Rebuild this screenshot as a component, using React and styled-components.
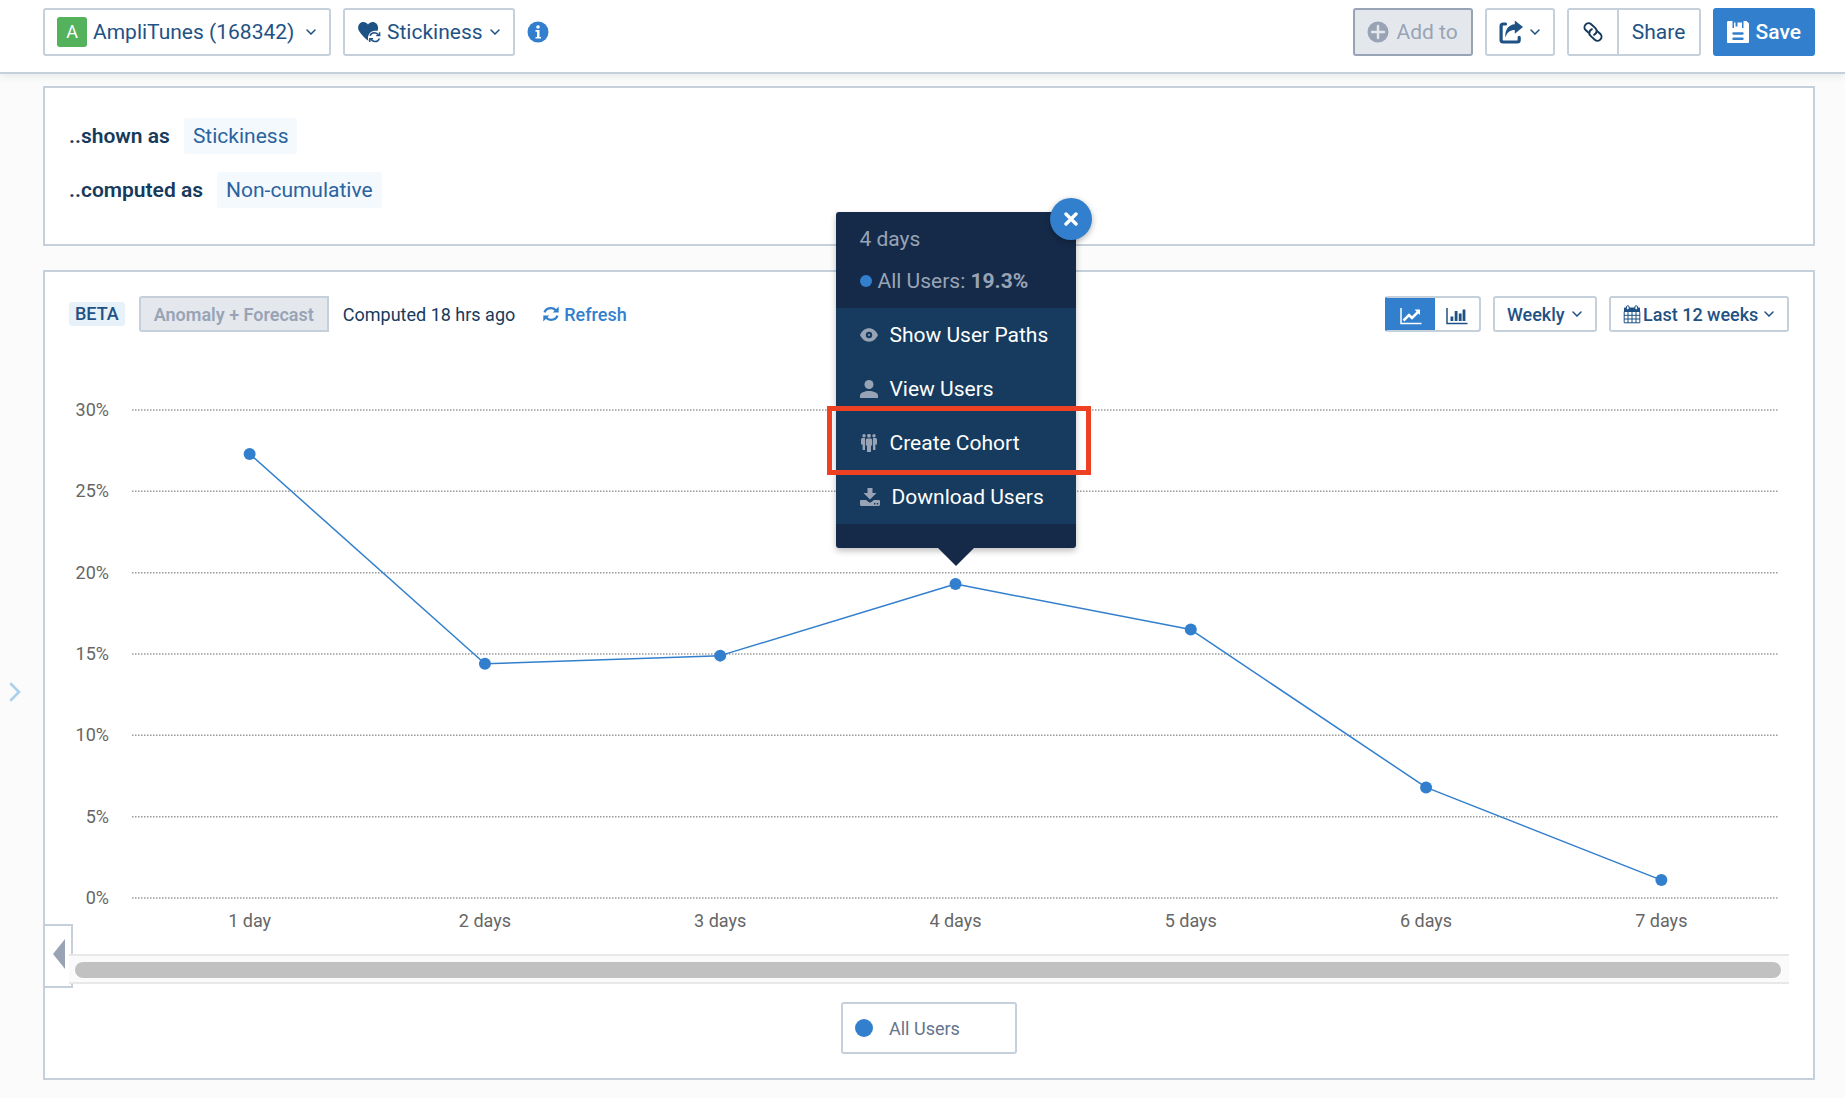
import React from "react";
import styled, { createGlobalStyle } from "styled-components";

const color = {
  navy: "#163a5c",
  ink: "#1f5284",
  link: "#2a639f",
  blue: "#327fcd",
  border: "#c5d0da",
  muted: "#98a4b5",
  disabled: "#e4e8ed",
  page: "#fbfbfb",
  axis: "#666666",
  tipDark: "#152a49",
  tip: "#163b5e",
  red: "#ee4023",
};

const GlobalStyle = createGlobalStyle`
  *, *::before, *::after { box-sizing: border-box; }
  body {
    margin: 0;
    background: ${color.page};
    color: ${color.navy};
    font-family: Roboto, "Liberation Sans", sans-serif;
  }
  button, select { font: inherit; color: inherit; cursor: pointer; }
  svg { display: block; flex: none; }
`;

/* ---------- icons ---------- */

const Chevron = () => (
  <svg width="10" height="6" viewBox="0 0 10 6" fill="none" stroke="currentColor" strokeWidth="1.5">
    <path d="M1 1l4 4 4-4" strokeLinecap="round" />
  </svg>
);
const HeartSync = () => (
  <svg width="24" height="24" viewBox="0 0 24 24">
    <path fill="currentColor" d="M11 4.6C9.200 1.400 5.200 1.200 3 3.200c-2.400 2.200-2.500 5.600-.6 8.300C4.400 14.700 8 18.500 11.600 21c-1.900-5 1-9.900 6.400-10.300 1 0 1.900.1 2.500.4 1-2.600.8-5.400-1.100-7.500C17 1.200 12.900 1.500 11 4.600z" />
    <g fill="none" stroke="currentColor" strokeWidth="1.500">
      <path d="M13 15.800c.7-2 2.600-3.200 4.700-3.100 1.700.1 3 .9 3.900 2.200" />
      <path d="M22.400 18.400c-.7 2-2.600 3.200-4.700 3.100-1.700-.1-3-.9-3.900-2.200" />
      <path d="M22.600 12.200v3.300h-3.300M12.800 22v-3.300h3.300" />
    </g>
  </svg>
);
const Info = () => (
  <svg width="22" height="22" viewBox="0 0 22 22">
    <circle cx="11" cy="11" r="10.500" fill={color.blue} />
    <circle cx="11" cy="6" r="1.800" fill="#fff" />
    <path d="M8.500 9h4v7h1.500v1.600H8.500V16H10v-5.300H8.500z" fill="#fff" />
  </svg>
);
const PlusCircle = () => (
  <svg width="22" height="22" viewBox="0 0 22 22">
    <circle cx="11" cy="11" r="10.500" fill="currentColor" />
    <path d="M11 5v12M5 11h12" stroke={color.disabled} strokeWidth="2.400" strokeLinecap="round" />
  </svg>
);
const Export = () => (
  <svg width="24" height="24" viewBox="0 0 24 24">
    <path fill="none" stroke="currentColor" strokeWidth="3.200" strokeLinecap="round" d="M6.500 4H4.200C3 4 2.100 4.900 2.100 6v14c0 1.100.9 2 2.100 2h14c1.100 0 2-.9 2-2v-2.600" />
    <path fill="currentColor" d="M15.800.6L24 7l-8.200 6.800V10c-4.600 0-7.600 2-9.500 7.600C5.700 9.600 9.700 4.600 15.800 4.200z" />
  </svg>
);
const Link = () => (
  <svg width="22" height="22" viewBox="0 0 22 22" fill="none" stroke="currentColor" strokeWidth="2">
    <g transform="rotate(42 11 11)" strokeLinecap="round">
      <path d="M8 14.500H4.500a4 4 0 0 1 0-8h5.700a4 4 0 0 1 3.500 5.800" />
      <path d="M14 7.500h3.500a4 4 0 0 1 0 8h-5.700a4 4 0 0 1-3.500-5.800" />
    </g>
  </svg>
);
const Floppy = () => (
  <svg width="22" height="22" viewBox="0 0 22 22">
    <path fill="currentColor" d="M1.500 0h4v7h11V0h3L22 2.500V21c0 .6-.4 1-1 1H1c-.6 0-1-.4-1-1V1.500C0 .6.600 0 1.500 0z" />
    <path fill="currentColor" d="M10.500 1.500h4.500V7h-8V1.500h1.500v4h2z" />
    <path stroke={color.blue} strokeWidth="2.400" strokeLinecap="round" d="M6.500 12.500h9M6.500 17.800h9" />
  </svg>
);
const Sync = () => (
  <svg width="16" height="16" viewBox="0 0 16 16">
    <g fill="none" stroke="currentColor" strokeWidth="2.300">
      <path d="M1.500 6.300C2.500 3.600 5 2.200 8 2.200c2 0 3.600.7 4.800 2" />
      <path d="M14.500 9.700c-1 2.700-3.500 4.100-6.500 4.100-2 0-3.600-.7-4.800-2" />
    </g>
    <path fill="currentColor" d="M15.700.6v6H9.700zM.3 15.400v-6h6z" />
  </svg>
);
const LineChart = () => (
  <svg width="22" height="18" viewBox="0 0 22 18" fill="none" stroke="currentColor">
    <path d="M1 1v15.500h20.500" strokeWidth="1.500" />
    <path d="M3.500 13.500L9 8l3 3 6-6" strokeWidth="2.500" />
    <path d="M14.500 2.500h5.500v5.500z" fill="currentColor" stroke="none" />
  </svg>
);
const BarChart = () => (
  <svg width="22" height="18" viewBox="0 0 22 18">
    <path d="M1 1v15.500h20.500" fill="none" stroke="currentColor" strokeWidth="1.500" />
    <path fill="currentColor" d="M4.500 9.500h2.800V14H4.500zM8.700 4h2.800v10H8.700zM12.800 6.500h2.800V14h-2.800zM16.600 2.500h2.800V14h-2.800z" />
  </svg>
);
const Calendar = () => (
  <svg width="18" height="19" viewBox="0 0 18 19">
    <path fill="currentColor" d="M2 2.500h14c.6 0 1 .4 1 1V7H1V3.500c0-.6.400-1 1-1z" />
    <path fill="none" stroke="currentColor" d="M1.200 6.500h15.600v11.300H1.200zM5 7v11M9 7v11M13 7v11M1 10.300h16M1 14h16" />
    <g fill="#fff" stroke="currentColor">
      <rect x="3.500" y="0.700" width="2.600" height="4" rx="1.300" />
      <rect x="11.900" y="0.700" width="2.600" height="4" rx="1.300" />
    </g>
  </svg>
);
const Eye = () => (
  <svg width="18" height="18" viewBox="0 0 18 18">
    <path fill="currentColor" d="M9 2.300c3.800 0 7 2.400 9 6.700-2 4.300-5.200 6.700-9 6.700S2 13.300 0 9c2-4.300 5.200-6.700 9-6.700z" />
    <circle cx="9" cy="9" r="3.200" fill={color.tip} />
    <circle cx="9" cy="9" r="1" fill="currentColor" />
  </svg>
);
const Person = () => (
  <svg width="18" height="18" viewBox="0 0 18 18" fill="currentColor">
    <circle cx="9" cy="4.500" r="4.500" />
    <path d="M0 18v-2.500C0 12.500 5 11 9 11s9 1.500 9 4.500V18z" />
  </svg>
);
const Cohort = () => (
  <svg width="18" height="18" viewBox="0 0 18 18" fill="currentColor">
    <circle cx="4" cy="1.800" r="1.700" />
    <circle cx="14" cy="1.800" r="1.700" />
    <circle cx="9" cy="1.800" r="1.900" />
    <path d="M2.500 4H5v12H2.600v-5.500H1V5.500C1 4.700 1.700 4 2.500 4zM13 4h2.500c.8 0 1.500.7 1.500 1.500v5h-1.600V16H13zM7.300 4.500h3.400c.8 0 1.500.7 1.500 1.500v5.500H11V18H7v-6.500H5.800V6c0-.8.700-1.500 1.500-1.500z" />
  </svg>
);
const Download = () => (
  <svg width="20" height="18" viewBox="0 0 20 18">
    <path fill="currentColor" d="M7.500 0h5v5h4L10 11.500 3.500 5h4z" />
    <path fill="currentColor" d="M1.200 12h5l2.400 2c.9.700 1.900.7 2.800 0l2.400-2h5c.7 0 1.200.5 1.200 1.200v3.600c0 .7-.5 1.200-1.200 1.200H1.200C.5 18 0 17.500 0 16.800v-3.600C0 12.500.5 12 1.200 12z" />
    <path fill={color.tip} d="M14 15h1.500v1.400H14zM16.800 15h1.500v1.400h-1.500z" />
  </svg>
);
const Cross = () => (
  <svg width="14" height="14" viewBox="0 0 14 14" stroke="currentColor" strokeWidth="3.400" strokeLinecap="round">
    <path d="M2 2l10 10M12 2L2 12" />
  </svg>
);
const Expand = () => (
  <svg width="12" height="20" viewBox="0 0 12 20" fill="none" stroke="currentColor" strokeWidth="2.600" strokeLinecap="round">
    <path d="M2 2l8 8-8 8" />
  </svg>
);
const Triangle = () => (
  <svg width="12" height="30" viewBox="0 0 12 30">
    <path d="M12 0v30L0 15z" fill={color.muted} />
  </svg>
);

/* ---------- shared controls ---------- */

const box = `
  display: flex;
  align-items: center;
  border: 2px solid ${color.border};
  border-radius: 3px;
  background: #fff;
  color: ${color.ink};
`;

const Picker = styled.label`
  ${box}
  min-width: ${(p) => p.$min}px;
  height: ${(p) => (p.$compact ? 36 : 48)}px;
  gap: ${(p) => (p.$compact ? 2 : 6)}px;
  padding: 0 13px 0 12px;
  font-size: ${(p) => (p.$compact ? 18 : 21)}px;
  font-weight: ${(p) => (p.$compact ? 500 : 400)};
`;
const PickerSelect = styled.select`
  flex: 1;
  appearance: none;
  border: 0;
  padding: 0;
  background: none;
`;

function Dropdown({ name, value, icon, min, compact }) {
  return (
    <Picker $min={min} $compact={compact}>
      {icon}
      <PickerSelect aria-label={name}>
        <option>{value}</option>
      </PickerSelect>
      <Chevron />
    </Picker>
  );
}

const Button = styled.button`
  ${box}
  justify-content: center;
  height: 48px;
  min-width: ${(p) => p.$min}px;
  gap: 7px;
  padding: 0 12px;
  font-size: 21px;
  ${(p) => p.$primary && `background: ${color.blue}; border-color: ${color.blue}; color: #fff; font-weight: 500;`}
  &:disabled {
    background: ${color.disabled};
    border-color: ${color.muted};
    color: ${color.muted};
    cursor: default;
  }
`;

/* ---------- header ---------- */

const Header = styled.header`
  position: relative;
  display: flex;
  justify-content: space-between;
  align-items: flex-start;
  height: 74px;
  padding: 8px 30px 0 43px;
  background: #fff;
  border-bottom: 2px solid ${color.border};
  box-shadow: 0 2px 8px rgba(40, 80, 80, 0.1);
`;
const Cluster = styled.div`
  display: flex;
  align-items: center;
  gap: ${(p) => p.$gap || 12}px;
`;
const Avatar = styled.span`
  width: 30px;
  height: 30px;
  border-radius: 3px;
  background: #54b15c;
  color: #fff;
  font-size: 18px;
  line-height: 30px;
  text-align: center;
`;
const InfoButton = styled.button`
  border: 0;
  padding: 0;
  background: none;
`;
const Split = styled.div`
  ${box}
  height: 48px;
  overflow: hidden;
`;
const SplitButton = styled.button`
  display: flex;
  align-items: center;
  justify-content: center;
  height: 100%;
  min-width: ${(p) => p.$min}px;
  border: 0;
  padding: 0 12px;
  background: ${(p) => (p.$active ? color.blue : "#fff")};
  color: ${(p) => (p.$active ? "#fff" : p.$dark ? color.navy : color.ink)};
  font-size: 21px;
  & + & {
    border-left: 2px solid ${color.border};
  }
`;

/* ---------- page body ---------- */

const Body = styled.div`
  display: grid;
  grid-template-columns: 43px minmax(0, 1fr);
  padding: 12px 30px 18px 0;
`;
const Rail = styled.aside`
  padding: 596px 0 0 9px;
`;
const RailButton = styled.button`
  border: 0;
  padding: 0;
  background: none;
  color: #a9d1ee;
`;
const Main = styled.main`
  display: flex;
  flex-direction: column;
  gap: 24px;
`;
const Panel = styled.section`
  display: flex;
  flex-direction: column;
  border: 2px solid ${color.border};
  background: #fff;
  padding: ${(p) => (p.$roomy ? "30px 24px 36px" : "24px")};
  gap: ${(p) => (p.$roomy ? 18 : 0)}px;
`;
const Setting = styled.div`
  display: flex;
  align-items: center;
  gap: 14px;
  font-size: 21px;
`;
const SettingName = styled.span`
  font-weight: 600;
`;
const Chip = styled.button`
  height: 36px;
  border: 0;
  border-radius: 3px;
  padding: 0 9px;
  background: #f4f9fd;
  color: ${color.link};
`;

/* ---------- chart panel ---------- */

const Toolbar = styled.div`
  display: flex;
  justify-content: space-between;
  font-size: 18px;
`;
const Beta = styled.span`
  padding: 0 6px;
  border-radius: 3px;
  background: #e7f1fa;
  color: ${color.ink};
  font-weight: 500;
  line-height: 24px;
`;
const Anomaly = styled.button`
  height: 36px;
  min-width: 190px;
  border: 2px solid ${color.border};
  border-radius: 3px 0 0 3px;
  padding: 0 12px;
  background: ${color.disabled};
  color: ${color.muted};
  font-weight: 600;
`;
const Refresh = styled.button`
  display: flex;
  align-items: center;
  gap: 5px;
  margin-left: 14px;
  border: 0;
  padding: 0;
  background: none;
  color: ${color.blue};
  font-weight: 500;
`;
const Toggle = styled(Split)`
  height: 36px;
  border-left-color: ${color.blue};
  background: ${color.blue};
`;
const ToggleButton = styled(SplitButton)`
  padding: 4px 0 0;
  ${(p) => p.$active && `box-shadow: 0 -2px ${color.blue}, 0 2px ${color.blue};`}
  & + & {
    border-left: 0;
  }
`;

const Chart = styled.div`
  display: grid;
  grid-template-columns: 40px minmax(0, 1fr);
  column-gap: 23px;
  padding: 78px 10px 21px 0;
  color: ${color.axis};
  font-size: 18px;
  line-height: 24px;
`;
const YAxis = styled.div`
  display: flex;
  flex-direction: column;
  justify-content: space-between;
  margin: -12px 0;
  text-align: right;
`;
const Plot = styled.div`
  position: relative;
  height: 488px;
`;
const PlotSvg = styled.svg`
  width: 100%;
  height: 100%;
  overflow: visible;
`;
const XAxis = styled.div`
  grid-column: 2;
  display: flex;
  margin-top: 11px;
  text-align: center;
`;
const XLabel = styled.span`
  flex: 1;
`;

const Scroller = styled.div`
  position: relative;
`;
const Track = styled.div`
  position: relative;
  height: 30px;
  border: solid #e8e8e8;
  border-width: 2px 0;
  padding: 6px 8px 0 6px;
  background: #fafafa;
`;
const Thumb = styled.div`
  height: 16px;
  border-radius: 8px;
  background: #c1c1c1;
`;
const Collapse = styled.button`
  position: absolute;
  left: -24px;
  top: -30px;
  display: flex;
  align-items: center;
  width: 28px;
  height: 64px;
  border: 2px solid ${color.border};
  border-left: 0;
  padding: 0 0 5px 8px;
  background: #fff;
`;
const Legend = styled.button`
  ${box}
  align-self: center;
  gap: 16px;
  width: 176px;
  height: 52px;
  margin-top: 18px;
  padding: 0 12px;
  color: #64748d;
  font-size: 18px;
`;
const Dot = styled.span`
  flex: none;
  width: ${(p) => p.$size}px;
  height: ${(p) => p.$size}px;
  border-radius: 50%;
  background: ${color.blue};
`;

/* ---------- data point popover ---------- */

const Popover = styled.div`
  position: absolute;
  z-index: 2;
  width: 240px;
  transform: translate(-50%, calc(-100% - 36px));
  border-radius: 3px;
  background: ${color.tipDark};
  color: ${color.muted};
  font-size: 21px;
  box-shadow: 0 3px 6px rgba(0, 0, 0, 0.25);
  &::after {
    content: "";
    position: absolute;
    top: 100%;
    left: 50%;
    margin-left: -18px;
    border: 18px solid transparent;
    border-top-color: ${color.tipDark};
    border-bottom: 0;
  }
`;
const PopoverHead = styled.div`
  padding: 6px 24px;
  line-height: 42px;
`;
const PopoverSeries = styled.div`
  display: flex;
  align-items: center;
  gap: 6px;
`;
const Menu = styled.div`
  display: flex;
  flex-direction: column;
  margin-bottom: 24px;
  background: ${color.tip};
`;
const MenuItem = styled.button`
  position: relative;
  display: flex;
  align-items: center;
  gap: 12px;
  height: 54px;
  border: 0;
  padding: 0 24px;
  background: none;
  color: ${color.muted};
  white-space: nowrap;
`;
const MenuText = styled.span`
  color: #fff;
`;
const Highlight = styled.span`
  position: absolute;
  z-index: 1;
  inset: -10px -15px -5px -9px;
  border: 5px solid ${color.red};
`;
const Close = styled.button`
  position: absolute;
  top: -14px;
  right: -16px;
  display: flex;
  align-items: center;
  justify-content: center;
  width: 42px;
  height: 42px;
  border: 0;
  border-radius: 50%;
  background: ${color.blue};
  color: #fff;
  box-shadow: 0 2px 6px rgba(0, 0, 0, 0.3);
`;

const MAX = 30;
const ticks = [30, 25, 20, 15, 10, 5, 0];
const series = [
  { label: "1 day", value: 27.3 },
  { label: "2 days", value: 14.4 },
  { label: "3 days", value: 14.9 },
  { label: "4 days", value: 19.3 },
  { label: "5 days", value: 16.5 },
  { label: "6 days", value: 6.8 },
  { label: "7 days", value: 1.1 },
];
const xOf = (i) => `${((i + 0.5) / series.length) * 100}%`;
const yOf = (v) => `${(1 - v / MAX) * 100}%`;
const selected = 3;

const actions = [
  { text: "Show User Paths", icon: <Eye /> },
  { text: "View Users", icon: <Person /> },
  { text: "Create Cohort", icon: <Cohort />, highlighted: true },
  { text: "Download Users", icon: <Download /> },
];

function PointPopover() {
  const point = series[selected];
  return (
    <Popover style={{ left: xOf(selected), top: yOf(point.value) }}>
      <PopoverHead>
        <div>{point.label}</div>
        <PopoverSeries>
          <Dot $size={12} />
          <span>
            All Users: <strong>{point.value}%</strong>
          </span>
        </PopoverSeries>
      </PopoverHead>
      <Menu>
        {actions.map((a) => (
          <MenuItem key={a.text}>
            {a.icon}
            <MenuText>{a.text}</MenuText>
            {a.highlighted && <Highlight />}
          </MenuItem>
        ))}
      </Menu>
      <Close aria-label="Close">
        <Cross />
      </Close>
    </Popover>
  );
}

export default function App() {
  return (
    <>
      <GlobalStyle />
      <Header>
        <Cluster>
          <Dropdown name="Project" value="AmpliTunes (168342)" min={288} icon={<Avatar>A</Avatar>} />
          <Dropdown name="Chart type" value="Stickiness" min={172} icon={<HeartSync />} />
          <InfoButton aria-label="Info">
            <Info />
          </InfoButton>
        </Cluster>
        <Cluster>
          <Button $min={120} disabled>
            <PlusCircle />
            Add to
          </Button>
          <Button $min={70} aria-label="Export">
            <Export />
            <Chevron />
          </Button>
          <Split>
            <SplitButton $min={48} $dark aria-label="Copy link">
              <Link />
            </SplitButton>
            <SplitButton $min={82}>Share</SplitButton>
          </Split>
          <Button $min={102} $primary>
            <Floppy />
            Save
          </Button>
        </Cluster>
      </Header>
      <Body>
        <Rail>
          <RailButton aria-label="Expand sidebar">
            <Expand />
          </RailButton>
        </Rail>
        <Main>
          <Panel $roomy>
            <Setting>
              <SettingName>..shown as</SettingName>
              <Chip>Stickiness</Chip>
            </Setting>
            <Setting>
              <SettingName>..computed as</SettingName>
              <Chip>Non-cumulative</Chip>
            </Setting>
          </Panel>
          <Panel>
            <Toolbar>
              <Cluster $gap={14}>
                <Beta>BETA</Beta>
                <Anomaly disabled>Anomaly + Forecast</Anomaly>
                <span>Computed 18 hrs ago</span>
                <Refresh>
                  <Sync />
                  Refresh
                </Refresh>
              </Cluster>
              <Cluster>
                <Toggle>
                  <ToggleButton $min={48} $active aria-label="Line chart">
                    <LineChart />
                  </ToggleButton>
                  <ToggleButton $min={44} aria-label="Bar chart">
                    <BarChart />
                  </ToggleButton>
                </Toggle>
                <Dropdown name="Interval" value="Weekly" min={104} compact />
                <Dropdown name="Date range" value="Last 12 weeks" min={180} compact icon={<Calendar />} />
              </Cluster>
            </Toolbar>
            <Chart>
              <YAxis>
                {ticks.map((t) => (
                  <span key={t}>{t}%</span>
                ))}
              </YAxis>
              <Plot>
                <PlotSvg>
                  {ticks.map((t) => (
                    <line key={t} x1="0" x2="100%" y1={yOf(t)} y2={yOf(t)} stroke="#9a9a9a" strokeWidth="1.5" strokeDasharray="1.5 1.5" />
                  ))}
                  {series.slice(1).map((p, i) => (
                    <line key={p.label} x1={xOf(i)} y1={yOf(series[i].value)} x2={xOf(i + 1)} y2={yOf(p.value)} stroke={color.blue} strokeWidth="1.5" />
                  ))}
                  {series.map((p, i) => (
                    <circle key={p.label} cx={xOf(i)} cy={yOf(p.value)} r="6" fill={color.blue} />
                  ))}
                </PlotSvg>
                <PointPopover />
              </Plot>
              <XAxis>
                {series.map((p) => (
                  <XLabel key={p.label}>{p.label}</XLabel>
                ))}
              </XAxis>
            </Chart>
            <Scroller>
              <Collapse aria-label="Collapse">
                <Triangle />
              </Collapse>
              <Track>
                <Thumb />
              </Track>
            </Scroller>
            <Legend>
              <Dot $size={18} />
              All Users
            </Legend>
          </Panel>
        </Main>
      </Body>
    </>
  );
}
